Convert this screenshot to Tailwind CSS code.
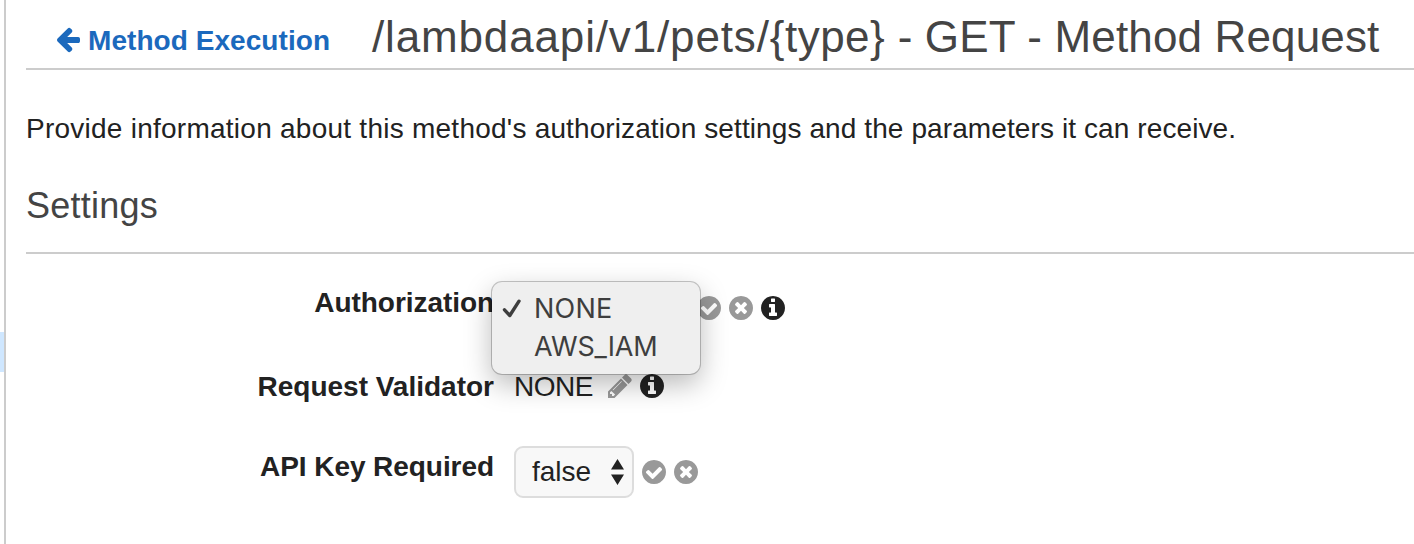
<!DOCTYPE html>
<html lang="en">
<head>
<meta charset="utf-8">
<title>Method Request</title>
<script src="https://cdn.jsdelivr.net/npm/@tailwindcss/browser@4"></script>
</head>
<body class="bg-white">
<svg class="hidden">
  <symbol id="check" viewBox="128 128 1536 1536"><path d="M1412 734q0-28-18-46l-91-90q-19-19-45-19t-45 19l-408 407-226-226q-19-19-45-19t-45 19l-91 90q-18 18-18 46 0 27 18 45l362 362q19 19 45 19 27 0 46-19l543-543q18-18 18-45zm252 162q0 209-103 385.5t-279.5 279.5-385.5 103-385.5-103-279.5-279.5-103-385.5 103-385.5 279.5-279.5 385.5-103 385.5 103 279.5 279.5 103 385.5z"/></symbol>
  <symbol id="times" viewBox="128 128 1536 1536"><path d="M1277 1122q0-26-19-45l-181-181 181-181q19-19 19-45 0-27-19-46l-90-90q-19-19-46-19-26 0-45 19l-181 181-181-181q-19-19-45-19-27 0-46 19l-90 90q-19 19-19 46 0 26 19 45l181 181-181 181q-19 19-19 45 0 27 19 46l90 90q19 19 46 19 26 0 45-19l181-181 181 181q19 19 45 19 27 0 46-19l90-90q19-19 19-46zm387-226q0 209-103 385.5t-279.5 279.5-385.5 103-385.5-103-279.5-279.5-103-385.5 103-385.5 279.5-279.5 385.5-103 385.5 103 279.5 279.5 103 385.5z"/></symbol>
  <symbol id="info" viewBox="128 128 1536 1536"><path d="M1152 1376v-160q0-14-9-23t-23-9h-96v-512q0-14-9-23t-23-9h-320q-14 0-23 9t-9 23v160q0 14 9 23t23 9h96v320h-96q-14 0-23 9t-9 23v160q0 14 9 23t23 9h448q14 0 23-9t9-23zm-128-896v-160q0-14-9-23t-23-9h-192q-14 0-23 9t-9 23v160q0 14 9 23t23 9h192q14 0 23-9t9-23zm640 416q0 209-103 385.5t-279.5 279.5-385.5 103-385.5-103-279.5-279.5-103-385.5 103-385.5 279.5-279.5 385.5-103 385.5 103 279.5 279.5 103 385.5z"/></symbol>
</svg>
<div class="flex h-[544px] w-[1414px] overflow-hidden font-['Liberation_Sans',Arial,sans-serif] text-[28px] leading-8 text-[#222]">
  <aside class="w-1 shrink-0 pt-[332px]"><div class="h-10 bg-[#cfe7ff]"></div></aside>
  <main class="flex-1 border-l-2 border-[#ccc] pl-5 whitespace-nowrap">
    <header class="flex h-[70px] border-b-2 border-[#ccc] pl-7">
      <a class="flex w-[318px] shrink-0 pt-[25px] font-bold text-[#1b69bd]">
        <svg class="mr-[6px] size-7" viewBox="0 0 1792 1792" fill="currentColor"><path d="M1664 896v128q0 53-32.5 90.5t-84.5 37.5h-704l293 294q38 36 38 90t-38 90l-75 76q-37 37-90 37-52 0-91-37l-651-652q-37-37-37-90 0-52 37-91l651-650q38-38 91-38 52 0 90 38l75 74q38 38 38 91t-38 91l-293 293h704q52 0 84.5 37.5t32.5 90.5z"/></svg>
        <span class="tracking-[0.06px]">Method Execution</span>
      </a>
      <h1 class="pt-[12px] text-[44px] leading-[50px] text-[#444]"><span class="tracking-[0.85px]">/lambdaapi/v1/pets/</span><span class="tracking-[0.5px]">{type}</span><span class="tracking-[0.15px]"> - GET - Method Request</span></h1>
    </header>
    <p class="mt-[43px]"><span class="tracking-[0.25px]">Provide information about this method's </span><span class="tracking-[0.1px]">authorization settings and the parameters it can receive.</span></p>
    <h2 class="mt-[40px] h-[69px] border-b-2 border-[#ccc] text-[36px] leading-[42px] tracking-[0.25px] text-[#444]">Settings</h2>

    <section>
      <div class="relative flex h-[84px] pt-[33px]">
        <div class="w-[468px] shrink-0 text-right font-bold tracking-[-0.06px]">Authorization</div>
        <div class="flex gap-2 pt-[9px] pl-[203px]">
          <svg class="size-6 fill-[#999]"><use href="#check"/></svg>
          <svg class="size-6 fill-[#999]"><use href="#times"/></svg>
          <svg class="size-6 fill-[#222]"><use href="#info"/></svg>
        </div>
        <div class="absolute top-[28px] left-[466px] z-10 h-[92px] w-[208px] rounded-[10px] bg-[#efefef] pt-[8px] font-[Inter,sans-serif] text-[27px] leading-[38px] text-[#3e3e3e] shadow-[0_0_0_1px_rgba(0,0,0,0.22),0_10px_28px_rgba(0,0,0,0.28)]">
          <div class="flex">
            <svg class="mt-[8px] ml-[10px] h-[20px] w-[20px]" viewBox="0 0 20 20" fill="none" stroke="currentColor" stroke-width="3.4" stroke-linecap="round" stroke-linejoin="round"><path d="M2.500 11.800 7.800 17.500 17 3.200"/></svg>
            <span class="ml-[12px] tracking-[0.2px]">NONE</span>
          </div>
          <div class="pl-[42px] tracking-[-0.15px]">AWS_IAM</div>
        </div>
      </div>
      <div class="flex h-[80px] pt-[33px]">
        <div class="w-[468px] shrink-0 text-right font-bold">Request Validator</div>
        <div class="flex pl-5">
          <span class="w-[92px] tracking-[-0.5px]">NONE</span>
          <svg class="mt-px size-7 fill-[#999]" viewBox="0 0 1792 1792"><path d="M491 1536l91-91-235-235-91 91v107h128v128h107zm523-928q0-22-22-22-10 0-17 7l-542 542q-7 7-7 17 0 22 22 22 10 0 17-7l542-542q7-7 7-17zm-54-192l416 416-832 832h-416v-416zm683 96q0 53-37 90l-166 166-416-416 166-165q36-38 90-38 53 0 91 38l235 234q37 39 37 91z"/></svg>
          <svg class="mt-[3px] ml-[6px] size-6 fill-[#222]"><use href="#info"/></svg>
        </div>
      </div>
      <div class="flex pt-[28px]">
        <div class="w-[468px] shrink-0 pt-[5px] text-right font-bold tracking-[-0.06px]">API Key Required</div>
        <div class="flex items-center gap-2 pl-5">
          <div class="flex h-[52px] w-[120px] items-center justify-between rounded-[9px] border-2 border-[#ddd] bg-[#f8f8f8] pr-2 pl-4">
            <span>false</span>
            <svg class="h-[26px] w-[13px] fill-[#222]" viewBox="0 0 13 26"><path d="M0 10.500 6.500 0 13 10.500ZM0 15.500H13L6.500 26Z"/></svg>
          </div>
          <svg class="-ml-[0.5px] size-6 fill-[#999]"><use href="#check"/></svg>
          <svg class="size-6 fill-[#999]"><use href="#times"/></svg>
        </div>
      </div>
    </section>
  </main>
</div>
</body>
</html>
